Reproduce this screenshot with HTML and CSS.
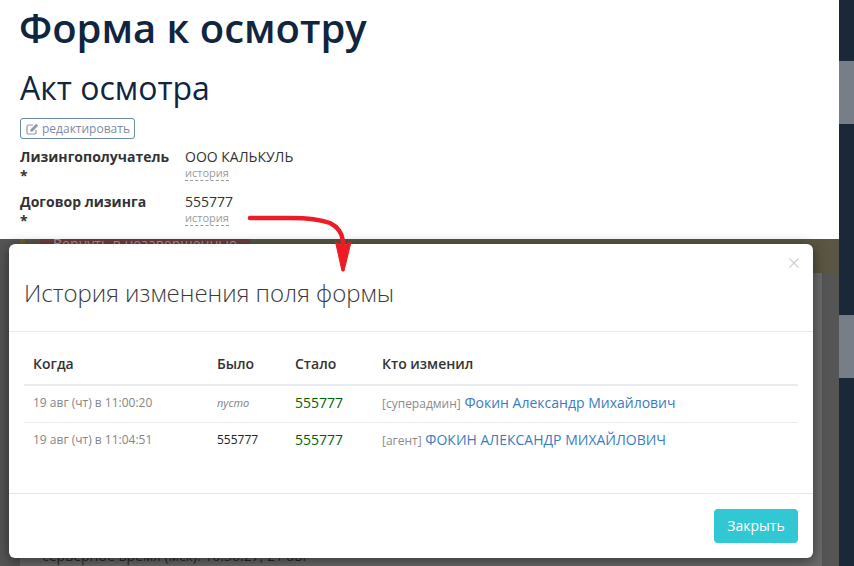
FILE: index.html
```html
<!DOCTYPE html>
<html lang="ru">
<head>
<meta charset="utf-8">
<title>Форма к осмотру</title>
<link rel="stylesheet" href="styles.css">
</head>
<body>
<div class="page">
  <main class="main">
    <section class="sheet">
      <h1 class="title">Форма к осмотру</h1>
      <h2 class="subtitle">Акт осмотра</h2>
      <button class="edit-btn" type="button">
        <svg class="edit-icon" viewBox="0 0 13 12" width="13" height="12" aria-hidden="true">
          <path d="M10 7v2.600c0 .8-.6 1.400-1.400 1.400H2.400C1.600 11 1 10.400 1 9.600V3.400C1 2.600 1.600 2 2.400 2H7" fill="none" stroke="currentColor" stroke-width="1.200"/>
          <path d="M4.500 6.500 10.200 .8l2 2L6.500 8.500l-2.300.3z" fill="currentColor"/>
        </svg>
        редактировать
      </button>
      <dl class="fields">
        <dt class="field-label">Лизингополучатель <span class="req">*</span></dt>
        <dd class="field-value">ООО КАЛЬКУЛЬ<span class="history"><span class="history-link">история</span></span></dd>
        <dt class="field-label">Договор лизинга <span class="req">*</span></dt>
        <dd class="field-value">555777<span class="history"><span class="history-link">история</span></span></dd>
      </dl>
    </section>
    <section class="behind">
      <div class="alert-band">
        <span class="return-btn">Вернуть в незавершенные</span>
      </div>
      <div class="behind-body">
        <p class="server-time">серверное время (мск): 16:36:27, 21 авг</p>
      </div>
    </section>
  </main>
  <aside class="rail">
    <div class="thumb thumb-a"></div>
    <div class="thumb thumb-b"></div>
  </aside>
</div>

<div class="modal">
  <button class="modal-close" type="button" aria-label="Закрыть">
    <svg viewBox="0 0 10 10" width="10" height="10" aria-hidden="true"><path d="M.5.5l9 9M9.500.5l-9 9" stroke="currentColor" stroke-width="1.100" fill="none"/></svg>
  </button>
  <header class="modal-header">История изменения поля формы</header>
  <div class="modal-body">
    <table class="log">
      <thead>
        <tr><th class="c-when">Когда</th><th class="c-was">Было</th><th class="c-now">Стало</th><th>Кто изменил</th></tr>
      </thead>
      <tbody>
        <tr>
          <td class="when">19 авг (чт) в 11:00:20</td>
          <td class="was"><em class="empty">пусто</em></td>
          <td class="now">555777</td>
          <td class="who"><span class="role">[суперадмин]</span> <a class="person">Фокин Александр Михайлович</a></td>
        </tr>
        <tr>
          <td class="when">19 авг (чт) в 11:04:51</td>
          <td class="was">555777</td>
          <td class="now">555777</td>
          <td class="who"><span class="role">[агент]</span> <a class="person">ФОКИН АЛЕКСАНДР МИХАЙЛОВИЧ</a></td>
        </tr>
      </tbody>
    </table>
  </div>
  <footer class="modal-footer"><button class="close-btn" type="button">Закрыть</button></footer>
</div>

<svg class="arrow" viewBox="0 0 110 60" width="110" height="60" aria-hidden="true">
  <path d="M3 3H44C58 3 72 4 83 8C91 12 95 18 96 26V34" fill="none" stroke="#ed1c24" stroke-width="4.500" stroke-linecap="round"/>
  <path d="M88.500 27L94 30H98L104 27L97 56H95Z" fill="#ed1c24" stroke="#ed1c24" stroke-linejoin="round"/>
</svg>
</body>
</html>
```
FILE: styles.css
```css
* { box-sizing: border-box; }
html, body { margin: 0; padding: 0; height: 100%; overflow: hidden; }
body { font-family: "Open Sans", "Noto Sans", sans-serif; color: #333; background: #555; }

.page { display: flex; width: 854px; height: 566px; }
.main { width: 839px; display: flex; flex-direction: column; }
.rail { position: relative; width: 15px; background: #1b2838; }
.thumb { position: absolute; left: 0; width: 15px; height: 63px; background: #777e87; }
.thumb-a { top: 61px; }
.thumb-b { top: 315px; }

.sheet { height: 239px; background: #fff; padding: 0 20px; overflow: hidden; }
.title { margin: 3px 0 0 -1px; font-size: 40px; line-height: 50px; font-weight: 600; color: #10253f; }
.subtitle { margin: 14px 0 0; font-size: 32px; line-height: 42px; font-weight: 400; color: #10253f; }
.edit-btn { display: flex; align-items: center; gap: 3px; height: 21px; width: 115px; margin-top: 9px; padding: 0 0 0 5px; font: 400 12px/1 "Open Sans", sans-serif; color: #7d8ba6; background: #fff; border: 1px solid #6d88ad; border-radius: 3px; white-space: nowrap; }
.edit-icon { flex: none; color: #8d99ae; }

.fields { display: grid; grid-template-columns: 165px 1fr; row-gap: 7px; margin: 8px 0 0; font-size: 14px; }
.field-label { font-weight: 700; font-size: 14px; line-height: 19px; color: #333; }
.req { display: block; }
.field-value { margin: 0; color: #333; line-height: 19px; }
.history { display: block; font-size: 11px; line-height: 13px; color: #9a9a9a; }
.history-link { border-bottom: 1px dashed #999; display: inline-block; padding-bottom: 1px; }

.behind { flex: 1; display: flex; flex-direction: column; background: #555; padding-left: 20px; overflow: hidden; }
.alert-band { height: 34px; background: #5a5643; overflow: hidden; padding-left: 15px; margin-right: -20px; flex: none; border-left: 5px solid #6b6030; }
.return-btn { display: block; width: 210px; height: 34px; background: #6e3d3f; color: #a99; font-size: 14px; line-height: 10px; padding-left: 13px; white-space: nowrap; }
.behind-body { flex: 1; background: #6b6b6b; margin-right: 17px; position: relative; overflow: hidden; }
.server-time { position: absolute; left: 22px; top: 274px; margin: 0; font-size: 14px; line-height: 18px; color: #2b2b2b; white-space: nowrap; }

.modal { position: absolute; left: 9px; top: 244px; width: 804px; height: 314px; background: #fff; border-radius: 6px; box-shadow: 0 3px 14px rgba(0,0,0,.5); display: flex; flex-direction: column; }
.modal-close { position: absolute; top: 14px; right: 14px; padding: 0; border: 0; background: none; color: #cfcfcf; line-height: 0; }
.modal-header { height: 88px; padding: 34px 15px 0; font-size: 24px; line-height: 30px; font-weight: 300; color: #3a3a3a; border-bottom: 1px solid #e9e9e9; flex: none; }
.modal-body { flex: 1; padding: 15px 15px 0; }
.log { width: 774px; border-collapse: collapse; table-layout: fixed; font-size: 13px; }
.log th { height: 38px; padding: 0 0 4px 9px; text-align: left; font-weight: 600; font-size: 14px; color: #333; border-bottom: 2px solid #e9ecef; }
.c-when { width: 184px; }
.c-was { width: 78px; }
.c-now { width: 87px; }
.log td { height: 37px; padding: 0 0 2px 9px; border-bottom: 1px solid #e9ecef; white-space: nowrap; }
.log tr:last-child td { border-bottom: 0; }
.when { font-size: 12px; color: #858585; }
.was { font-size: 12px; color: #222; }
.empty { color: #808080; font-size: 11px; }
.now { font-size: 14px; color: #006400; }
.who { font-size: 14px; }
.role { font-size: 12px; color: #8c8c8c; }
.person { color: #3a7cc0; font-size: 14px; }

.modal-footer { flex: none; height: 65px; border-top: 1px solid #e5e5e5; display: flex; justify-content: flex-end; align-items: flex-start; padding: 15px 15px 0; }
.close-btn { width: 84px; height: 34px; border: 0; border-radius: 4px; background: #31c7d3; color: #fff; font: 400 14px/1 "Open Sans", sans-serif; }

.arrow { position: absolute; left: 247px; top: 215px; }
```
